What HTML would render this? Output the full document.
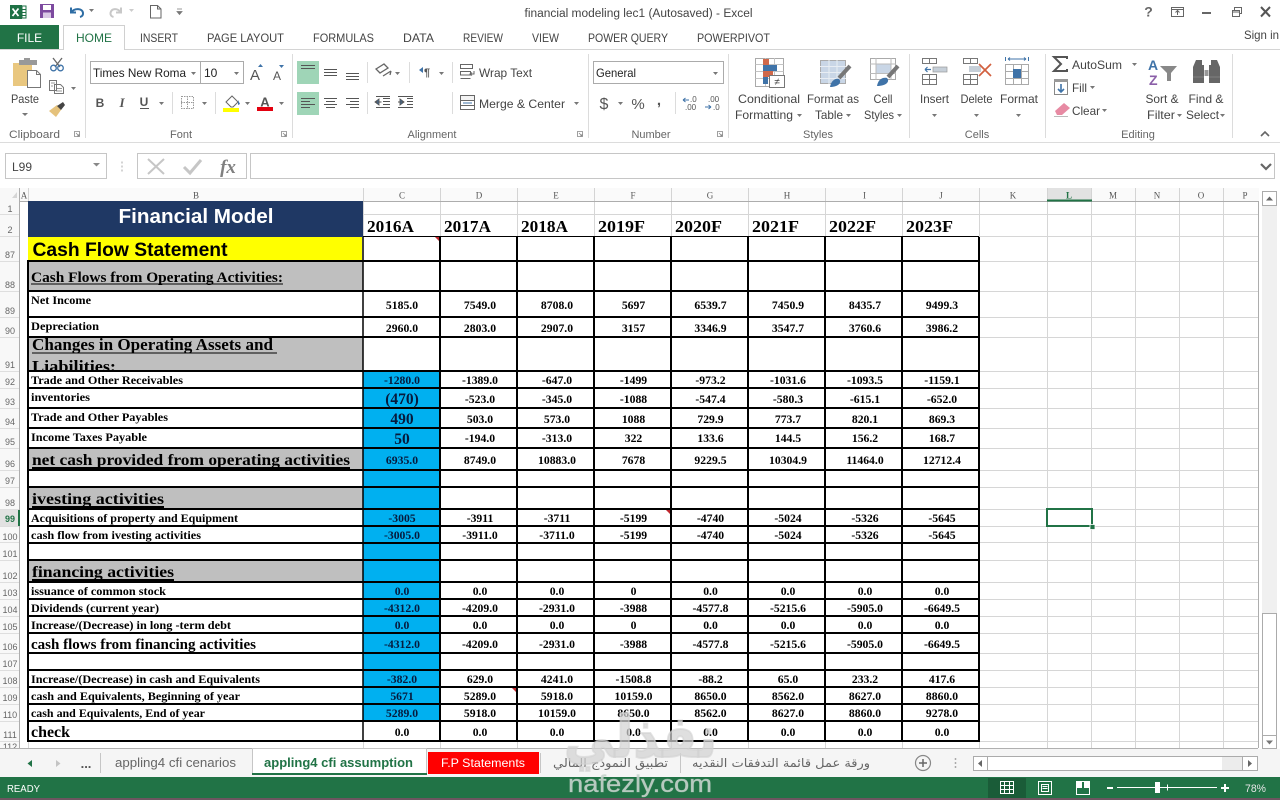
<!DOCTYPE html>
<html lang="en"><head><meta charset="utf-8"><title>financial modeling lec1 (Autosaved) - Excel</title>
<style>
html,body{margin:0;padding:0;width:1280px;height:800px;overflow:hidden;background:#fff}
svg{display:block;position:absolute;left:0;top:0}
text{font-family:"Liberation Sans",sans-serif;fill:#444;font-size:12px}
.gl{font-size:11px;fill:#666;text-anchor:middle}
.m{text-anchor:middle}
.tab{font-size:12px;fill:#444}
.s{font-family:"Liberation Serif",serif;font-weight:bold;fill:#000}
.l{font-size:11.5px}
.h{font-size:15px}
.d{font-size:11.7px;text-anchor:middle}
.dc{fill:#071a3c}
.big{font-size:15.5px}
.y{font-size:16.5px}
.ch{font-family:"Liberation Serif",serif;font-size:9px;fill:#555;text-anchor:middle}
.rh{font-size:9px;fill:#666;text-anchor:middle}
.ar{font-family:"DejaVu Sans",sans-serif;font-size:12px;fill:#666}
</style></head><body>
<svg width="1280" height="800" viewBox="0 0 1280 800" xmlns="http://www.w3.org/2000/svg">
<!-- title bar -->
<rect x="10" y="5" width="12" height="14" fill="#1e7145"/><path d="M22 6h4v12h-4z" fill="#fff" stroke="#1e7145"/><path d="M22 9.500h4M22 12.500h4M22 15.500h4" stroke="#1e7145"/>
<path d="M12.500 8.500l6 7.500M18.500 8.500l-6 7.500" stroke="#fff" stroke-width="1.800"/>
<rect x="40" y="4" width="14" height="14" fill="#7d4a9f"/><rect x="43" y="5" width="8" height="5" fill="#fff"/><rect x="43" y="12.500" width="8" height="5.500" fill="#d9c8e5"/>
<path d="M71 7.500v5h5M71.500 12c3-4 11-4 11.500 1 .2 2-1 3.500-3 4" fill="none" stroke="#2e6da4" stroke-width="2"/>
<path d="M89 9h5l-2.500 3z" fill="#777"/>
<path d="M121 7.500v5h-5M120.500 12c-3-4-9-4-10 1-.2 2 1 3.500 3 4" fill="none" stroke="#c8c8c8" stroke-width="2"/>
<path d="M129 9h5l-2.500 3z" fill="#ccc"/>
<path d="M150.500 5.500h7l3.500 3.500v9h-10.500zM157.500 5.500v3.500h3.500" fill="#fff" stroke="#666"/>
<path d="M177 9h5M177 11.500h5l-2.500 3z" stroke="#777" fill="#777" stroke-width=".8"/>
<text x="638.500" y="17" class="m" textLength="228" lengthAdjust="spacingAndGlyphs" style="font-size:11.500px">financial modeling lec1 (Autosaved) - Excel</text>
<text x="1148.500" y="16.500" class="m" style="font-size:14px;font-weight:bold;fill:#666">?</text>
<path d="M1171.500 7.500h12v9h-12zM1171.500 9.500h12M1177.500 15v-4M1175.500 12.500l2-2 2 2" fill="none" stroke="#666"/>
<rect x="1202" y="12" width="9" height="2" fill="#666"/>
<path d="M1232.500 10.500h7v6h-7zM1232.500 12h7M1234.500 10v-2.500h7v6h-2" fill="none" stroke="#666"/>
<path d="M1261 7l9 9.500M1270 7l-9 9.500" stroke="#555" stroke-width="2"/>
<!-- tabs -->
<rect x="0" y="25" width="59" height="25" fill="#217346"/>
<text x="29.500" y="42" class="m" style="fill:#fff;font-size:12px">FILE</text>
<path d="M0 49.500h1280" stroke="#d4d4d4"/>
<path d="M63.500 50v-24.500h61v24.500" fill="#fff" stroke="#d0d0d0"/>
<rect x="64" y="48" width="60" height="3" fill="#fff"/>
<text x="76" y="42" textLength="36" lengthAdjust="spacingAndGlyphs" style="fill:#217346">HOME</text>
<text x="140" y="42" class="tab" textLength="38" lengthAdjust="spacingAndGlyphs">INSERT</text>
<text x="207" y="42" class="tab" textLength="77" lengthAdjust="spacingAndGlyphs">PAGE LAYOUT</text>
<text x="313" y="42" class="tab" textLength="61" lengthAdjust="spacingAndGlyphs">FORMULAS</text>
<text x="403" y="42" class="tab" textLength="31" lengthAdjust="spacingAndGlyphs">DATA</text>
<text x="463" y="42" class="tab" textLength="40" lengthAdjust="spacingAndGlyphs">REVIEW</text>
<text x="532" y="42" class="tab" textLength="27" lengthAdjust="spacingAndGlyphs">VIEW</text>
<text x="588" y="42" class="tab" textLength="80" lengthAdjust="spacingAndGlyphs">POWER QUERY</text>
<text x="697" y="42" class="tab" textLength="73" lengthAdjust="spacingAndGlyphs">POWERPIVOT</text>
<text x="1244" y="39" textLength="35" lengthAdjust="spacingAndGlyphs">Sign in</text>
<!-- ribbon separators -->
<path d="M85.500 54v84M292.500 54v84M588.500 54v84M728.500 54v84M909.500 54v84M1045.500 54v84M1232.500 54v84M0 142.500h1280" stroke="#dcdcdc"/>
<path d="M172.500 92v22M215.500 92v22M367.500 62v21M367.500 92v22M409.500 62v21M452.500 62v21M452.500 92v22M675.500 92v22" stroke="#dcdcdc"/>
<!-- group labels -->
<text x="9" y="138" textLength="51" lengthAdjust="spacingAndGlyphs" style="font-size:11px;fill:#666">Clipboard</text>
<text x="181" y="138" class="gl">Font</text>
<text x="432" y="138" class="gl">Alignment</text>
<text x="651" y="138" class="gl">Number</text>
<text x="818" y="138" class="gl">Styles</text>
<text x="977" y="138" class="gl">Cells</text>
<text x="1138" y="138" class="gl">Editing</text>
<path d="M74.500 131.500h5v5h-5zM76 133l3 3M79 134v2h-2" fill="none" stroke="#888" stroke-width=".8"/>
<path d="M281.500 131.500h5v5h-5zM283 133l3 3M286 134v2h-2" fill="none" stroke="#888" stroke-width=".8"/>
<path d="M577.500 131.500h5v5h-5zM579 133l3 3M582 134v2h-2" fill="none" stroke="#888" stroke-width=".8"/>
<path d="M717.500 131.500h5v5h-5zM719 133l3 3M722 134v2h-2" fill="none" stroke="#888" stroke-width=".8"/>
<path d="M1261 136l4-4 4 4" fill="none" stroke="#666" stroke-width="1.600"/>
<!-- clipboard -->
<rect x="13" y="63" width="19" height="23" fill="#e9c77f"/><rect x="19" y="60" width="18" height="5" fill="#999"/><rect x="24" y="58" width="6" height="4" fill="#999"/>
<path d="M27.500 70.500h9l4 4v13h-13z" fill="#fff" stroke="#777"/><path d="M36.500 70.500v4h4" fill="none" stroke="#777"/>
<text x="25" y="103" class="m" textLength="28" lengthAdjust="spacingAndGlyphs" style="font-size:12px">Paste</text>
<path d="M22 113h6l-3 3z" fill="#777"/>
<path d="M53 58l7 9M62 58l-7 9" stroke="#666" stroke-width="1.300"/><circle cx="53.500" cy="68" r="2.800" fill="none" stroke="#3f73a8" stroke-width="1.300"/><circle cx="60.500" cy="68" r="2.800" fill="none" stroke="#3f73a8" stroke-width="1.300"/>
<path d="M49.500 80.500h7v10h-7zM54.500 84.500h6l3 3v6h-9z" fill="#fff" stroke="#777"/><path d="M56 88.500h6M56 91h6M51 83h4M51 86h2" stroke="#777" stroke-width=".8"/>
<path d="M71 87h5l-2.500 3z" fill="#777"/>
<path d="M49 111l8-6 4 5-5 7z" fill="#e5c27c"/><path d="M57 106l6-4 2 3-4 5z" fill="#444"/>
<!-- font -->
<rect x="90.500" y="61.500" width="110" height="22" fill="#fff" stroke="#ababab"/><rect x="200.500" y="61.500" width="43" height="22" fill="#fff" stroke="#ababab"/>
<text x="93" y="77" textLength="93" lengthAdjust="spacingAndGlyphs" style="fill:#222">Times New Roma</text>
<text x="204" y="77" style="fill:#222">10</text>
<path d="M191 72h5l-2.500 3zM234 72h5l-2.500 3z" fill="#777"/>
<text x="255" y="80" class="m" style="font-size:15px;fill:#555">A</text><path d="M258 67l2.500-3 2.500 3z" fill="#3f73a8"/>
<text x="277" y="80" class="m" style="font-size:12px;fill:#555">A</text><path d="M279 65h5l-2.500 3z" fill="#3f73a8"/>
<text x="100" y="107" class="m" style="font-size:12px;font-weight:bold;fill:#555">B</text>
<text x="122" y="107" class="m" style="font-family:'Liberation Serif',serif;font-size:13px;font-style:italic;font-weight:bold;fill:#555">I</text>
<text x="144" y="106" class="m" style="font-size:12px;font-weight:bold;fill:#555">U</text><path d="M140 108.500h9" stroke="#555"/>
<path d="M159 102h5l-2.500 3zM202 102h5l-2.500 3zM245 102h5l-2.500 3zM279 102h5l-2.500 3z" fill="#777"/>
<rect x="181.500" y="96.500" width="12" height="12" fill="none" stroke="#999" stroke-dasharray="1.500 1"/><path d="M187.500 96v13M181 102.500h13" stroke="#999" stroke-dasharray="1.500 1"/>
<path d="M226 102l6-6 6 6-5 5h-2z" fill="#fff" stroke="#666"/><path d="M238 100l2 4-2 1z" fill="#3f73a8"/>
<rect x="223" y="108" width="16" height="4" fill="#ffff00"/>
<text x="265" y="106.500" class="m" style="font-size:13px;font-weight:bold;fill:#555">A</text><rect x="257" y="107" width="16" height="4" fill="#e3000f"/>
<!-- alignment -->
<rect x="297" y="61" width="22" height="23" fill="#9fd5b7"/><rect x="297" y="92" width="22" height="23" fill="#9fd5b7"/>
<path d="M301 65.500h14M301 68.500h14M324 69.500h13M324 72.500h13M324 75.500h13M346 73.500h13M346 76.500h13M346 79.500h13" stroke="#555"/>
<path d="M301 98.500h14M301 101.500h9M301 104.500h14M301 107.500h9M324 98.500h13M326 101.500h9M324 104.500h13M326 107.500h9M346 98.500h13M350 101.500h9M346 104.500h13M350 107.500h9" stroke="#555"/>
<path d="M376 69l8-5 4 4-8 5zM383 76l8-5M391 71l-1 4" fill="none" stroke="#666" stroke-width="1.300"/>
<path d="M395 72h5l-2.500 3zM439 72h5l-2.500 3z" fill="#777"/>
<path d="M419 70l4-3v6z" fill="#3f73a8"/><text x="424" y="76" style="font-size:11px;fill:#555;font-weight:bold">¶</text>
<path d="M375 102l4-3v6zM375.500 102h6M383 98.500h7M383 101.500h7M383 104.500h7M376 107.500h14M376 96.500h14" fill="#3f73a8" stroke="#555" stroke-width=".9"/>
<path d="M404 102l-4-3v6zM398 102h6M407 98.500h6M407 101.500h6M407 104.500h6M398 107.500h15M398 96.500h15" fill="#3f73a8" stroke="#555" stroke-width=".9"/>
<path d="M460.500 64.500h12v4h-12zM460.500 71.500h10v3.500h-10zM460.500 78.500h10M474 71v3h-4M472 72.500l-2 1.500 2 1.500" fill="none" stroke="#666"/>
<text x="479" y="77" textLength="53" lengthAdjust="spacingAndGlyphs">Wrap Text</text>
<path d="M460.500 95.500h14v14h-14zM460.500 100.500h14M460.500 105.500h14" fill="none" stroke="#666"/><rect x="461" y="101" width="13" height="4" fill="#fff"/><path d="M463 103h9" stroke="#3f73a8"/><rect x="461" y="96" width="13" height="4" fill="#f3f3f3"/>
<text x="479" y="108" textLength="86" lengthAdjust="spacingAndGlyphs">Merge &amp; Center</text>
<path d="M574 102h5l-2.500 3z" fill="#777"/>
<!-- number -->
<rect x="593.500" y="61.500" width="130" height="22" fill="#fff" stroke="#ababab"/>
<text x="596" y="77" textLength="40" lengthAdjust="spacingAndGlyphs" style="fill:#222">General</text>
<path d="M713 72h5l-2.500 3zM618 102h5l-2.500 3z" fill="#777"/>
<text x="604" y="109" class="m" style="font-size:16px;fill:#555">$</text>
<text x="638" y="109" class="m" style="font-size:15px;fill:#555">%</text>
<text x="659" y="105" class="m" style="font-size:15px;font-weight:bold;fill:#555">,</text>
<path d="M683 100h6M683 100l2.500-2M683 100l2.500 2" stroke="#3f73a8" fill="none"/>
<text x="690" y="102" style="font-size:8px;fill:#555">.0</text><text x="685" y="110" style="font-size:8px;fill:#555">.00</text>
<text x="708" y="102" style="font-size:8px;fill:#555">.00</text><text x="713" y="110" style="font-size:8px;fill:#555">.0</text>
<path d="M705 107h6M711 107l-2.500-2M711 107l-2.500 2" stroke="#3f73a8" fill="none"/>
<!-- styles -->
<rect x="755.500" y="58.500" width="28" height="28" fill="#fff" stroke="#aaa"/>
<path d="M755.500 64.500h28M755.500 71.500h28M755.500 78.500h28M765.500 58v28M774.500 58v28" stroke="#c4c4c4"/>
<rect x="763" y="59" width="6" height="6" fill="#d0684a"/><rect x="763" y="65" width="14" height="6" fill="#3f73a8"/><rect x="763" y="71" width="10" height="6" fill="#d0684a"/><rect x="763" y="77" width="5" height="7" fill="#3f73a8"/>
<rect x="769.500" y="75.500" width="15" height="12" fill="#fff" stroke="#777"/><text x="777" y="85" class="m" style="font-size:10px;fill:#444">≠</text>
<text x="769" y="103" class="m" textLength="62" lengthAdjust="spacingAndGlyphs">Conditional</text>
<text x="735" y="119" textLength="58" lengthAdjust="spacingAndGlyphs">Formatting</text><path d="M797 114h5l-2.500 3z" fill="#777"/>
<rect x="820.500" y="60.500" width="25" height="23" fill="#c9d6e6" stroke="#aaa"/><path d="M820 66.500h26M820 72.500h26M820 78.500h26M829 60v24M837 60v24" stroke="#e8edf3"/>
<path d="M850 66l-11 12" stroke="#777" stroke-width="4"/><path d="M830 87c1-6 5-9 9-8 3 3 0 8-9 8z" fill="#3f73a8"/>
<text x="833" y="103" class="m" textLength="52" lengthAdjust="spacingAndGlyphs">Format as</text>
<text x="815" y="119" textLength="28" lengthAdjust="spacingAndGlyphs">Table</text><path d="M846 114h5l-2.500 3z" fill="#777"/>
<rect x="870.500" y="58.500" width="25" height="21" fill="#fff" stroke="#aaa"/><rect x="876" y="64" width="15" height="9" fill="#c9d6e6"/><path d="M870 64h26M870 73.500h26M876 58v22M891 58v22" stroke="#bbb"/>
<path d="M898 66l-10 11" stroke="#777" stroke-width="4"/><path d="M877 86c1-6 5-9 10-8 3 3 0 8-10 8z" fill="#3f73a8"/>
<text x="883" y="103" class="m" textLength="19" lengthAdjust="spacingAndGlyphs">Cell</text>
<text x="864" y="119" textLength="30" lengthAdjust="spacingAndGlyphs">Styles</text><path d="M897 114h5l-2.500 3z" fill="#777"/>
<!-- cells -->
<path d="M922.500 58.500h14v5h-14zM929.500 58v5M922.500 74.500h14v10h-14zM922.500 79.500h14M929.500 74v10" fill="none" stroke="#777"/>
<rect x="933" y="67" width="14" height="5" fill="#c6cfd8" stroke="#999" stroke-width=".7"/><path d="M925 69.500h6M925 69.500l2.500-2.500M925 69.500l2.500 2.500" stroke="#3f73a8" stroke-width="1.200" fill="none"/>
<text x="934.500" y="103" class="m" textLength="29" lengthAdjust="spacingAndGlyphs">Insert</text><path d="M932 114h5l-2.500 3z" fill="#777"/>
<path d="M963.500 58.500h14v5h-14zM970.500 58v5M963.500 74.500h14v10h-14zM963.500 79.500h14M970.500 74v10" fill="none" stroke="#777"/>
<rect x="969" y="66" width="12" height="6" fill="#c6cfd8"/><path d="M979 64l12 12M991 64l-12 12" stroke="#d2603f" stroke-width="1.700"/>
<text x="976.500" y="103" class="m" textLength="32" lengthAdjust="spacingAndGlyphs">Delete</text><path d="M974 114h5l-2.500 3z" fill="#777"/>
<path d="M1005.500 57v4M1028.500 57v4M1008 59h18M1008 59l2-1.500M1008 59l2 1.500M1026 59l-2-1.500M1026 59l-2 1.500" stroke="#3f73a8" fill="none"/>
<path d="M1005.500 64.500h23v20h-23zM1005.500 71.500h23M1005.500 78.500h23M1013.500 64v20M1021.500 64v20" fill="#fff" stroke="#aaa"/><rect x="1013" y="69" width="8" height="9" fill="#3f73a8"/>
<text x="1019" y="103" class="m" textLength="38" lengthAdjust="spacingAndGlyphs">Format</text><path d="M1016 114h5l-2.500 3z" fill="#777"/>
<!-- editing -->
<path d="M1067 59v-2h-13l7 7-7 7h13v-2" fill="none" stroke="#555" stroke-width="2"/>
<text x="1072" y="69" textLength="50" lengthAdjust="spacingAndGlyphs">AutoSum</text><path d="M1132 63h5l-2.500 3z" fill="#777"/>
<rect x="1054.500" y="79.500" width="13" height="15" fill="#fff" stroke="#888"/><rect x="1054" y="79" width="14" height="3" fill="#999"/><path d="M1061 84v8M1058 89l3 3 3-3" stroke="#3f73a8" stroke-width="1.600" fill="none"/>
<text x="1072" y="92" textLength="15" lengthAdjust="spacingAndGlyphs">Fill</text><path d="M1090 86h5l-2.500 3z" fill="#777"/>
<path d="M1055 111l9-8 6 5-8 7h-5z" fill="#e78aa3"/><path d="M1054 116.500h14" stroke="#bbb"/>
<text x="1072" y="115" textLength="28" lengthAdjust="spacingAndGlyphs">Clear</text><path d="M1102 109h5l-2.500 3z" fill="#777"/>
<text x="1148" y="70" style="font-size:14px;font-weight:bold;fill:#3f73a8">A</text><text x="1149" y="85" style="font-size:14px;font-weight:bold;fill:#8b5fa8">Z</text>
<path d="M1160 66h17l-6 7v8h-4v-8z" fill="#888"/>
<text x="1162" y="103" class="m" textLength="33" lengthAdjust="spacingAndGlyphs">Sort &amp;</text>
<text x="1147" y="119" textLength="28" lengthAdjust="spacingAndGlyphs">Filter</text><path d="M1177 114h5l-2.500 3z" fill="#777"/>
<path d="M1196 60h6v5h2v11h-11v-9zM1217 60h-6v5h-2v11h11v-9z" fill="#666"/><path d="M1193 68v15h11v-15zM1209 68v15h11v-15z" fill="#666"/><path d="M1204.500 70h4v6h-4z" fill="#999"/><path d="M1193 77h11M1209 77h11" stroke="#999" stroke-width=".6"/>
<text x="1206" y="103" class="m" textLength="35" lengthAdjust="spacingAndGlyphs">Find &amp;</text>
<text x="1186" y="119" textLength="33" lengthAdjust="spacingAndGlyphs">Select</text><path d="M1220 114h5l-2.500 3z" fill="#777"/>
<!-- formula bar -->
<rect x="5.500" y="153.500" width="101" height="25" fill="#fff" stroke="#c6c6c6"/>
<text x="12" y="171" textLength="20" lengthAdjust="spacingAndGlyphs">L99</text>
<path d="M93 163h7l-3.500 3.500z" fill="#888"/>
<path d="M122 161.500v2M122 165.500v2M122 169.500v2" stroke="#aaa"/>
<rect x="137.500" y="153.500" width="109" height="25" fill="#fff" stroke="#c6c6c6"/>
<path d="M148 159l16 15M164 159l-16 15" stroke="#c6c6c6" stroke-width="2"/>
<path d="M184 167l6 6 11-13" fill="none" stroke="#c6c6c6" stroke-width="3"/>
<text x="228" y="173" class="m" style="font-family:'Liberation Serif',serif;font-style:italic;font-weight:bold;font-size:19px;fill:#808080">fx</text>
<rect x="250.500" y="153.500" width="1024" height="25" fill="#fff" stroke="#c6c6c6"/>
<path d="M1261 164l5 5 5-5" fill="none" stroke="#666" stroke-width="2.200"/>

<!-- sheet headers -->
<rect x="0" y="188" width="1259" height="13" fill="#fafafa"/>
<rect x="0" y="188" width="19" height="560" fill="#f8f8f8"/>
<path d="M17 192v6h-5z" fill="#d6d6d6"/>
<rect x="1047" y="188" width="45" height="13" fill="#e2e2e2"/>
<text x="24" y="198.500" class="ch">A</text><text x="196" y="198.500" class="ch">B</text><text x="402" y="198.500" class="ch">C</text><text x="479" y="198.500" class="ch">D</text><text x="556" y="198.500" class="ch">E</text><text x="633" y="198.500" class="ch">F</text><text x="710" y="198.500" class="ch">G</text><text x="787" y="198.500" class="ch">H</text><text x="864.500" y="198.500" class="ch">I</text><text x="941" y="198.500" class="ch">J</text><text x="1013" y="198.500" class="ch">K</text><text x="1069" y="198.500" class="ch" style="fill:#217346;font-weight:bold">L</text><text x="1113" y="198.500" class="ch">M</text><text x="1157" y="198.500" class="ch">N</text><text x="1201" y="198.500" class="ch">O</text><text x="1245" y="198.500" class="ch">P</text>
<path d="M19.500 188v13M28.500 188v13M363.500 188v13M440.500 188v13M517.500 188v13M594.500 188v13M671.500 188v13M748.500 188v13M825.500 188v13M902.500 188v13M979.500 188v13M1047.500 188v13M1091.500 188v13M1135.500 188v13M1179.500 188v13M1223.500 188v13" stroke="#d4d4d4"/>
<!-- light grid -->
<path d="M363 214.500h895M979 236.500h279M979 261.500h279M979 291.500h279M979 317.500h279M979 337.500h279M979 371.500h279M979 388.500h279M979 408.500h279M979 428.500h279M979 448.500h279M979 470.500h279M979 487.500h279M979 509.500h279M979 526.500h279M979 542.500h279M979 560.500h279M979 582.500h279M979 599.500h279M979 616.500h279M979 633.500h279M979 653.500h279M979 670.500h279M979 687.500h279M979 704.500h279M979 721.500h279M979 741.500h279" stroke="#d6d6d6"/>
<path d="M363.500 201v35M440.500 201v35M517.500 201v35M594.500 201v35M671.500 201v35M748.500 201v35M825.500 201v35M902.500 201v35M979.500 201v547M1047.500 201v547M1091.500 201v547M1135.500 201v547M1179.500 201v547M1223.500 201v547M28.500 741v7M363.500 741v7M440.500 741v7M517.500 741v7M594.500 741v7M671.500 741v7M748.500 741v7M825.500 741v7M902.500 741v7" stroke="#d6d6d6"/>
<path d="M19 201.500h1240M1258.500 201v547M19.500 188v560" stroke="#adadad"/>
<rect x="1047" y="199.500" width="45" height="2" fill="#217346"/>
<!-- row headers lines -->
<path d="M0 214.500h19M0 236.500h19M0 261.500h19M0 291.500h19M0 317.500h19M0 337.500h19M0 371.500h19M0 388.500h19M0 408.500h19M0 428.500h19M0 448.500h19M0 470.500h19M0 487.500h19M0 509.500h19M0 526.500h19M0 542.500h19M0 560.500h19M0 582.500h19M0 599.500h19M0 616.500h19M0 633.500h19M0 653.500h19M0 670.500h19M0 687.500h19M0 704.500h19M0 721.500h19M0 741.500h19" stroke="#dedede"/>
<rect x="0" y="510" width="19" height="16" fill="#e2e2e2"/><rect x="18" y="510" width="2" height="16" fill="#217346"/>
<text x="10" y="212" class="rh">1</text><text x="10" y="233" class="rh">2</text><text x="10" y="258" class="rh">87</text><text x="10" y="288" class="rh">88</text><text x="10" y="314" class="rh">89</text><text x="10" y="334" class="rh">90</text><text x="10" y="368" class="rh">91</text><text x="10" y="385" class="rh">92</text><text x="10" y="405" class="rh">93</text><text x="10" y="425" class="rh">94</text><text x="10" y="445" class="rh">95</text><text x="10" y="467" class="rh">96</text><text x="10" y="484" class="rh">97</text><text x="10" y="506" class="rh">98</text><text x="10" y="522" class="rh" style="fill:#217346;font-weight:bold">99</text><text x="10" y="540" class="rh">100</text><text x="10" y="557" class="rh">101</text><text x="10" y="579" class="rh">102</text><text x="10" y="596" class="rh">103</text><text x="10" y="613" class="rh">104</text><text x="10" y="630" class="rh">105</text><text x="10" y="650" class="rh">106</text><text x="10" y="667" class="rh">107</text><text x="10" y="684" class="rh">108</text><text x="10" y="701" class="rh">109</text><text x="10" y="718" class="rh">110</text><text x="10" y="738" class="rh">111</text>
<text x="10" y="750" class="rh">112</text>

<!-- fills -->
<rect x="28" y="201" width="335" height="36" fill="#1f3864"/>
<rect x="28" y="237" width="334" height="24" fill="#ffff00"/>
<rect x="28" y="261" width="335" height="30" fill="#bfbfbf"/>
<rect x="28" y="337" width="335" height="34" fill="#bfbfbf"/>
<rect x="28" y="448" width="335" height="22" fill="#bfbfbf"/>
<rect x="28" y="487" width="335" height="22" fill="#bfbfbf"/>
<rect x="28" y="560" width="335" height="22" fill="#bfbfbf"/>
<rect x="363" y="371" width="77" height="350" fill="#00b0f0"/>
<!-- black grid -->
<path d="M363 236.500h616" stroke="#000"/>
<path d="M28 261h952M28 291h952M28 317h952M28 337h952M28 371h952M28 388h952M28 408h952M28 428h952M28 448h952M28 470h952M28 487h952M28 509h952M28 526h952M28 543h952M28 560h952M28 582h952M28 599h952M28 616h952M28 633h952M28 653h952M28 670h952M28 687h952M28 704h952M28 721h952M28 741h952" stroke="#000" stroke-width="2"/>
<path d="M28 260v482M440 237v505M517 237v505M594 237v505M671 237v505M748 237v505M825 237v505M902 237v505M979 237v505" stroke="#000" stroke-width="2"/>
<path d="M363 237v505" stroke="#000" stroke-width="1.500"/>
<path d="M435 237h4v4zM512 688h4v4zM666 510h4v4z" fill="#c0272d"/>
<!-- heading text -->
<text x="196" y="223" class="m" textLength="155" lengthAdjust="spacingAndGlyphs" style="font-size:20.500px;font-weight:bold;fill:#fff">Financial Model</text>
<text x="32.500" y="256" textLength="195" lengthAdjust="spacingAndGlyphs" style="font-size:19.500px;font-weight:bold;fill:#000">Cash Flow Statement</text>
<text class="s y" x="367" y="232" textLength="47" lengthAdjust="spacingAndGlyphs">2016A</text>
<text class="s y" x="444" y="232" textLength="47" lengthAdjust="spacingAndGlyphs">2017A</text>
<text class="s y" x="521" y="232" textLength="47" lengthAdjust="spacingAndGlyphs">2018A</text>
<text class="s y" x="598" y="232" textLength="47" lengthAdjust="spacingAndGlyphs">2019F</text>
<text class="s y" x="675" y="232" textLength="47" lengthAdjust="spacingAndGlyphs">2020F</text>
<text class="s y" x="752" y="232" textLength="47" lengthAdjust="spacingAndGlyphs">2021F</text>
<text class="s y" x="829" y="232" textLength="47" lengthAdjust="spacingAndGlyphs">2022F</text>
<text class="s y" x="906" y="232" textLength="47" lengthAdjust="spacingAndGlyphs">2023F</text>
<!-- labels -->
<text class="s h" x="31" y="282" textLength="252" lengthAdjust="spacingAndGlyphs">Cash Flows from Operating Activities:</text><rect x="31" y="283.500" width="252" height="1" fill="#000"/>
<text class="s l" x="31" y="304" textLength="60" lengthAdjust="spacingAndGlyphs">Net Income</text>
<text class="s l" x="31" y="330" textLength="68" lengthAdjust="spacingAndGlyphs">Depreciation</text>
<text class="s h" x="32" y="350" textLength="241" lengthAdjust="spacingAndGlyphs" style="font-size:16.500px">Changes in Operating Assets and</text><rect x="32" y="352.500" width="245" height="1" fill="#000"/>
<svg x="28" y="338" width="335" height="32" viewBox="28 338 335 32" overflow="hidden"><text class="s h" x="32" y="372" textLength="84" lengthAdjust="spacingAndGlyphs" style="font-size:16.500px">Liabilities:</text></svg>
<text class="s l" x="31" y="384" textLength="152" lengthAdjust="spacingAndGlyphs">Trade and Other Receivables</text>
<text class="s l" x="31" y="401" textLength="59" lengthAdjust="spacingAndGlyphs">inventories</text>
<text class="s l" x="31" y="421" textLength="137" lengthAdjust="spacingAndGlyphs">Trade and Other Payables</text>
<text class="s l" x="31" y="441" textLength="116" lengthAdjust="spacingAndGlyphs">Income Taxes Payable</text>
<text class="s h" x="32" y="465" textLength="318" lengthAdjust="spacingAndGlyphs" style="font-size:16px">net cash provided from operating activities</text><rect x="32" y="467" width="318" height="2" fill="#000"/>
<text class="s h" x="32" y="504" textLength="132" lengthAdjust="spacingAndGlyphs" style="font-size:16px">ivesting activities</text><rect x="32" y="506" width="132" height="2" fill="#000"/>
<text class="s l" x="31" y="522" textLength="207" lengthAdjust="spacingAndGlyphs">Acquisitions of property and Equipment</text>
<text class="s l" x="31" y="539" textLength="170" lengthAdjust="spacingAndGlyphs">cash flow from ivesting activities</text>
<text class="s h" x="32" y="577" textLength="142" lengthAdjust="spacingAndGlyphs" style="font-size:16px">financing activities</text><rect x="32" y="579" width="142" height="2" fill="#000"/>
<text class="s l" x="31" y="595" textLength="135" lengthAdjust="spacingAndGlyphs">issuance of common stock</text>
<text class="s l" x="31" y="612" textLength="128" lengthAdjust="spacingAndGlyphs">Dividends (current year)</text>
<text class="s l" x="31" y="629" textLength="200" lengthAdjust="spacingAndGlyphs">Increase/(Decrease) in long -term debt</text>
<text class="s h" x="31" y="649" textLength="225" lengthAdjust="spacingAndGlyphs">cash flows from financing activities</text>
<text class="s l" x="31" y="683" textLength="229" lengthAdjust="spacingAndGlyphs">Increase/(Decrease) in cash and Equivalents</text>
<text class="s l" x="31" y="700" textLength="209" lengthAdjust="spacingAndGlyphs">cash and Equivalents, Beginning of year</text>
<text class="s l" x="31" y="717" textLength="174" lengthAdjust="spacingAndGlyphs">cash and Equivalents, End of year</text>
<text class="s h" x="31" y="737" textLength="39" lengthAdjust="spacingAndGlyphs" style="font-size:15.500px">check</text>
<!-- data -->
<g class="data">
<text class="s d" x="402" y="309">5185.0</text><text class="s d" x="480" y="309">7549.0</text><text class="s d" x="557" y="309">8708.0</text><text class="s d" x="633.500" y="309">5697</text><text class="s d" x="710.500" y="309">6539.7</text><text class="s d" x="788" y="309">7450.9</text><text class="s d" x="865" y="309">8435.7</text><text class="s d" x="942" y="309">9499.3</text>
<text class="s d" x="402" y="332">2960.0</text><text class="s d" x="480" y="332">2803.0</text><text class="s d" x="557" y="332">2907.0</text><text class="s d" x="633.500" y="332">3157</text><text class="s d" x="710.500" y="332">3346.9</text><text class="s d" x="788" y="332">3547.7</text><text class="s d" x="865" y="332">3760.6</text><text class="s d" x="942" y="332">3986.2</text>
<text class="s d dc" x="402" y="384">-1280.0</text><text class="s d" x="480" y="384">-1389.0</text><text class="s d" x="557" y="384">-647.0</text><text class="s d" x="633.500" y="384">-1499</text><text class="s d" x="710.500" y="384">-973.2</text><text class="s d" x="788" y="384">-1031.6</text><text class="s d" x="865" y="384">-1093.5</text><text class="s d" x="942" y="384">-1159.1</text>
<text class="s d big dc" x="402" y="404">(470)</text><text class="s d" x="480" y="403">-523.0</text><text class="s d" x="557" y="403">-345.0</text><text class="s d" x="633.500" y="403">-1088</text><text class="s d" x="710.500" y="403">-547.4</text><text class="s d" x="788" y="403">-580.3</text><text class="s d" x="865" y="403">-615.1</text><text class="s d" x="942" y="403">-652.0</text>
<text class="s d big dc" x="402" y="424">490</text><text class="s d" x="480" y="423">503.0</text><text class="s d" x="557" y="423">573.0</text><text class="s d" x="633.500" y="423">1088</text><text class="s d" x="710.500" y="423">729.9</text><text class="s d" x="788" y="423">773.7</text><text class="s d" x="865" y="423">820.1</text><text class="s d" x="942" y="423">869.3</text>
<text class="s d big dc" x="402" y="444">50</text><text class="s d" x="480" y="442">-194.0</text><text class="s d" x="557" y="442">-313.0</text><text class="s d" x="633.500" y="442">322</text><text class="s d" x="710.500" y="442">133.6</text><text class="s d" x="788" y="442">144.5</text><text class="s d" x="865" y="442">156.2</text><text class="s d" x="942" y="442">168.7</text>
<text class="s d dc" x="402" y="464">6935.0</text><text class="s d" x="480" y="464">8749.0</text><text class="s d" x="557" y="464">10883.0</text><text class="s d" x="633.500" y="464">7678</text><text class="s d" x="710.500" y="464">9229.5</text><text class="s d" x="788" y="464">10304.9</text><text class="s d" x="865" y="464">11464.0</text><text class="s d" x="942" y="464">12712.4</text>
<text class="s d dc" x="402" y="522">-3005</text><text class="s d" x="480" y="522">-3911</text><text class="s d" x="557" y="522">-3711</text><text class="s d" x="633.500" y="522">-5199</text><text class="s d" x="710.500" y="522">-4740</text><text class="s d" x="788" y="522">-5024</text><text class="s d" x="865" y="522">-5326</text><text class="s d" x="942" y="522">-5645</text>
<text class="s d dc" x="402" y="539">-3005.0</text><text class="s d" x="480" y="539">-3911.0</text><text class="s d" x="557" y="539">-3711.0</text><text class="s d" x="633.500" y="539">-5199</text><text class="s d" x="710.500" y="539">-4740</text><text class="s d" x="788" y="539">-5024</text><text class="s d" x="865" y="539">-5326</text><text class="s d" x="942" y="539">-5645</text>
<text class="s d dc" x="402" y="595">0.0</text><text class="s d" x="480" y="595">0.0</text><text class="s d" x="557" y="595">0.0</text><text class="s d" x="633.500" y="595">0</text><text class="s d" x="710.500" y="595">0.0</text><text class="s d" x="788" y="595">0.0</text><text class="s d" x="865" y="595">0.0</text><text class="s d" x="942" y="595">0.0</text>
<text class="s d dc" x="402" y="612">-4312.0</text><text class="s d" x="480" y="612">-4209.0</text><text class="s d" x="557" y="612">-2931.0</text><text class="s d" x="633.500" y="612">-3988</text><text class="s d" x="710.500" y="612">-4577.8</text><text class="s d" x="788" y="612">-5215.6</text><text class="s d" x="865" y="612">-5905.0</text><text class="s d" x="942" y="612">-6649.5</text>
<text class="s d dc" x="402" y="629">0.0</text><text class="s d" x="480" y="629">0.0</text><text class="s d" x="557" y="629">0.0</text><text class="s d" x="633.500" y="629">0</text><text class="s d" x="710.500" y="629">0.0</text><text class="s d" x="788" y="629">0.0</text><text class="s d" x="865" y="629">0.0</text><text class="s d" x="942" y="629">0.0</text>
<text class="s d dc" x="402" y="648">-4312.0</text><text class="s d" x="480" y="648">-4209.0</text><text class="s d" x="557" y="648">-2931.0</text><text class="s d" x="633.500" y="648">-3988</text><text class="s d" x="710.500" y="648">-4577.8</text><text class="s d" x="788" y="648">-5215.6</text><text class="s d" x="865" y="648">-5905.0</text><text class="s d" x="942" y="648">-6649.5</text>
<text class="s d dc" x="402" y="683">-382.0</text><text class="s d" x="480" y="683">629.0</text><text class="s d" x="557" y="683">4241.0</text><text class="s d" x="633.500" y="683">-1508.8</text><text class="s d" x="710.500" y="683">-88.2</text><text class="s d" x="788" y="683">65.0</text><text class="s d" x="865" y="683">233.2</text><text class="s d" x="942" y="683">417.6</text>
<text class="s d dc" x="402" y="700">5671</text><text class="s d" x="480" y="700">5289.0</text><text class="s d" x="557" y="700">5918.0</text><text class="s d" x="633.500" y="700">10159.0</text><text class="s d" x="710.500" y="700">8650.0</text><text class="s d" x="788" y="700">8562.0</text><text class="s d" x="865" y="700">8627.0</text><text class="s d" x="942" y="700">8860.0</text>
<text class="s d dc" x="402" y="717">5289.0</text><text class="s d" x="480" y="717">5918.0</text><text class="s d" x="557" y="717">10159.0</text><text class="s d" x="633.500" y="717">8650.0</text><text class="s d" x="710.500" y="717">8562.0</text><text class="s d" x="788" y="717">8627.0</text><text class="s d" x="865" y="717">8860.0</text><text class="s d" x="942" y="717">9278.0</text>
<text class="s d" x="402" y="736">0.0</text><text class="s d" x="480" y="736">0.0</text><text class="s d" x="557" y="736">0.0</text><text class="s d" x="633.500" y="736">0.0</text><text class="s d" x="710.500" y="736">0.0</text><text class="s d" x="788" y="736">0.0</text><text class="s d" x="865" y="736">0.0</text><text class="s d" x="942" y="736">0.0</text>
</g>
<!-- selection -->
<rect x="1047" y="509" width="45" height="17" fill="none" stroke="#217346" stroke-width="2"/>
<rect x="1090" y="524.500" width="5" height="5" fill="#217346" stroke="#fff" stroke-width=".8"/>
<!-- v scrollbar -->
<rect x="1262" y="191" width="15" height="558" fill="#f0f0f0"/>
<rect x="1262.500" y="191.500" width="14" height="14" fill="#fff" stroke="#ababab"/><path d="M1266 200.500h7l-3.500-4z" fill="#666"/>
<rect x="1262.500" y="613.500" width="14" height="122" fill="#fff" stroke="#ababab"/>
<rect x="1262.500" y="735.500" width="14" height="13" fill="#fff" stroke="#ababab"/><path d="M1266 740.500h7l-3.500 4z" fill="#777"/>
<!-- sheet tabs -->
<rect x="0" y="749" width="1280" height="28" fill="#f5f5f5"/>
<path d="M0 748.500h1258" stroke="#b0b0b0"/>
<path d="M32 760v7l-4.500-3.500z" fill="#217346"/><path d="M56 760v7l4.500-3.500z" fill="#c4c4c4"/>
<text x="86" y="768" class="m" style="font-weight:bold;font-size:13px;fill:#555">...</text>
<path d="M100.500 753v20M680.500 753v20M540.500 753v20" stroke="#c6c6c6"/>
<text x="115" y="767" textLength="121" lengthAdjust="spacingAndGlyphs" style="font-size:13px;fill:#666">appling4 cfi cenarios</text>
<rect x="252" y="749" width="175" height="25" fill="#fff"/>
<path d="M252.500 774v-25.500h174v25.500" fill="none" stroke="#c6c6c6"/>
<rect x="252" y="773" width="175" height="2" fill="#217346"/>
<text x="264" y="767" textLength="149" lengthAdjust="spacingAndGlyphs" style="font-size:13px;font-weight:bold;fill:#217346">appling4 cfi assumption</text>
<rect x="428" y="752" width="111" height="22" fill="#ff0000"/>
<text x="441" y="767" textLength="84" lengthAdjust="spacingAndGlyphs" style="fill:#fff">F.P Statements</text>
<text x="553" y="767" class="ar" textLength="115" lengthAdjust="spacingAndGlyphs" direction="rtl" unicode-bidi="embed" text-anchor="end">تطبيق النموذج المالي</text>
<text x="692" y="767" class="ar" textLength="178" lengthAdjust="spacingAndGlyphs" direction="rtl" unicode-bidi="embed" text-anchor="end">ورقة عمل قائمة التدفقات النقديه</text>
<circle cx="923" cy="763" r="7.500" fill="none" stroke="#888" stroke-width="1.200"/><path d="M923 759v8M919 763h8" stroke="#666" stroke-width="1.500"/>
<path d="M955.500 758v2M955.500 762v2M955.500 766v2" stroke="#aaa" stroke-width="1.500"/>
<rect x="973.500" y="756.500" width="284" height="14" fill="#fff" stroke="#ababab"/>
<rect x="1222" y="757" width="20" height="13" fill="#ececec"/>
<path d="M987.500 756v15M1242.500 756v15" stroke="#ababab"/>
<path d="M982 760v7l-4-3.500zM1248 760v7l4-3.500z" fill="#666"/>
<!-- status bar -->
<rect x="0" y="777" width="1280" height="21" fill="#217346"/>
<rect x="0" y="798" width="1280" height="2" fill="#6d5560"/>
<text x="7" y="792" textLength="33" lengthAdjust="spacingAndGlyphs" style="font-size:10.500px;fill:#fff">READY</text>
<rect x="988" y="778" width="38" height="20" fill="#1a5c38"/>
<path d="M1000.500 781.500h13v12h-13zM1000.500 785.500h13M1000.500 789.500h13M1004.500 781v13M1009.500 781v13" fill="none" stroke="#fff"/>
<path d="M1038.500 781.500h13v13h-13zM1041.500 784.500h7v7h-7zM1042.500 786.500h5M1042.500 788.500h5" fill="none" stroke="#fff"/>
<path d="M1076.500 781.500h13v13h-13z" fill="none" stroke="#fff"/><path d="M1077 781h5v7h-5zM1084 781h5v7h-5z" fill="#fff"/>
<rect x="1107" y="787" width="6" height="2" fill="#fff"/>
<path d="M1117 787.500h100" stroke="#fff"/>
<rect x="1155" y="782" width="5" height="11" fill="#fff"/>
<path d="M1167.500 784.500v6" stroke="#fff"/>
<path d="M1225 784v8M1221 788h8" stroke="#fff" stroke-width="2"/>
<text x="1245" y="792" textLength="21" lengthAdjust="spacingAndGlyphs" style="font-size:11px;fill:#e6e6e6">78%</text>
<!-- watermark -->
<text x="564" y="757" textLength="153" lengthAdjust="spacingAndGlyphs" direction="rtl" unicode-bidi="embed" text-anchor="end" style="font-family:'DejaVu Sans',sans-serif;font-size:58px;font-weight:bold;fill:#d2d2d2;fill-opacity:.72;stroke:#d2d2d2;stroke-opacity:.6;stroke-width:2">نفذلي</text>
<text x="568" y="792" textLength="144" lengthAdjust="spacingAndGlyphs" style="font-size:24px;fill:#c6d3cc;fill-opacity:.9;stroke:#c6d3cc;stroke-opacity:.5;stroke-width:.6">nafezly.com</text>
</svg>
</body></html>
